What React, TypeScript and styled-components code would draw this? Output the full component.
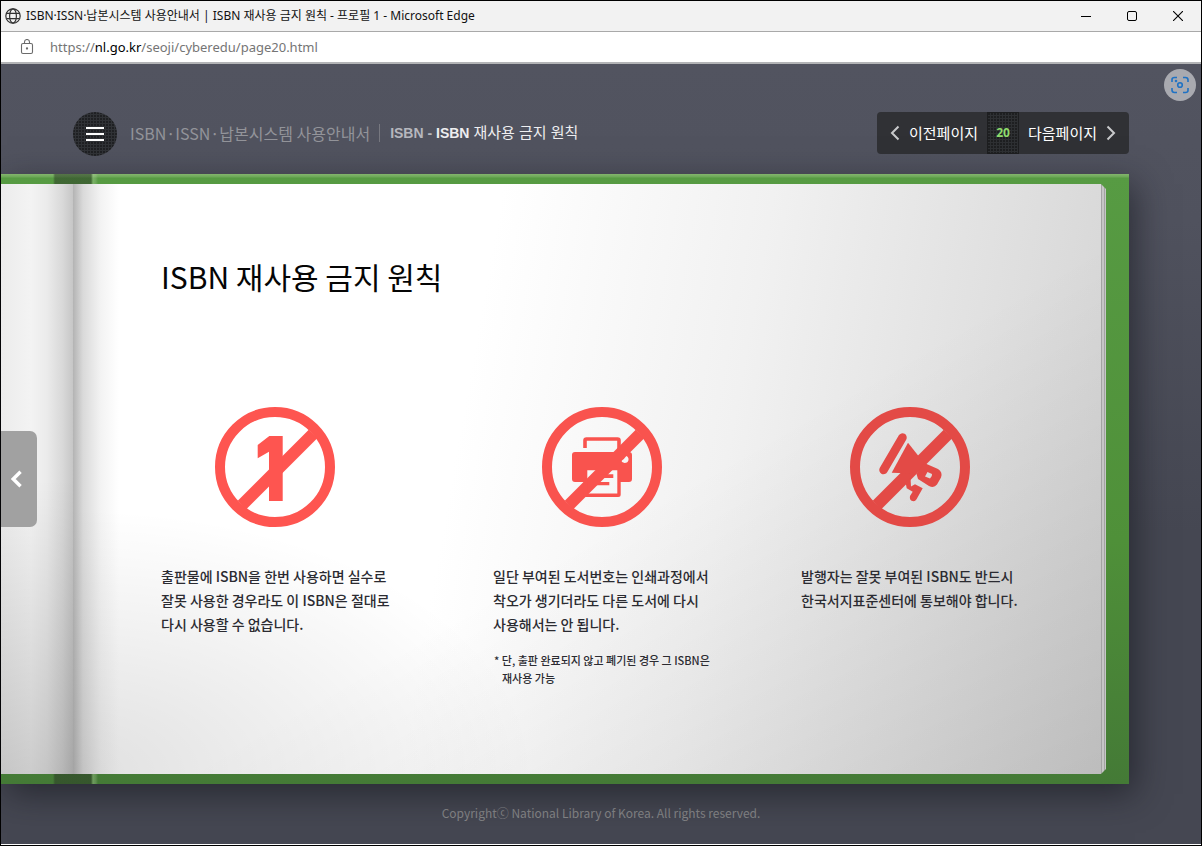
import React from "react";
import styled, { createGlobalStyle } from "styled-components";

const KR = `"Noto Sans CJK KR", sans-serif`;

const GlobalStyle = createGlobalStyle`
  *, *::before, *::after { box-sizing: border-box; }
  body { margin: 0; font-family: ${KR}; }
  h1, p, ul { margin: 0; padding: 0; }
  ul { list-style: none; }
  button { font: inherit; color: inherit; border: 0; padding: 0; background: none; cursor: pointer; }
  a { color: inherit; text-decoration: none; }
`;

const BrowserWindow = styled.div`
  display: flex;
  flex-direction: column;
  min-height: 100vh;
  border: 1px solid #000;
`;

const TitleBar = styled.header`
  display: flex;
  align-items: center;
  height: 31px;
  padding: 0 11px 0 4px;
  background: #f2f2f2;
  border-bottom: 1px solid #a9a9a9;
`;

const WindowTitle = styled.span`
  flex: 1;
  margin-left: 5px;
  font: 12px/20px "Noto Sans", ${KR};
  color: #111;
  white-space: nowrap;
`;

const WindowControls = styled.div`
  display: flex;
  gap: 22px;
`;

const WindowButton = styled.button`
  display: grid;
  place-items: center;
  width: 24px;
  height: 24px;
`;

const AddressBar = styled.div`
  display: flex;
  align-items: center;
  gap: 16px;
  height: 32px;
  padding-left: 19px;
  background: #fff;
  border-bottom: 2px solid #b3b4b6;
`;

const Address = styled.span`
  font: 13px/20px "Noto Sans", sans-serif;
  color: #757575;

  b { font-weight: 400; color: #000; }
`;

const Page = styled.div`
  position: relative;
  flex: 1;
  display: flex;
  flex-direction: column;
  background: linear-gradient(#525460, #50525e 20%, #454752 60%, #454752);
  border-bottom: 1px solid #fff;
`;

const CaptureButton = styled.button`
  position: absolute;
  top: 5px;
  right: 5px;
  display: grid;
  place-items: center;
  width: 32px;
  height: 32px;
  border-radius: 50%;
  background: #a9aab0;
`;

const PageHeader = styled.header`
  display: flex;
  align-items: flex-start;
  padding: 48px 72px 18px;
`;

const dots = `radial-gradient(circle at 1px 1px, rgba(20, 20, 22, 0.6) 1px, transparent 1px) 0 0 / 3px 3px`;

const MenuButton = styled.button`
  display: grid;
  place-items: center;
  width: 44px;
  height: 44px;
  border-radius: 50%;
  background: ${dots}, #303236;
`;

const Breadcrumb = styled.div`
  flex: 1;
  display: flex;
  align-items: center;
  height: 42px;
  margin-left: 13px;
  white-space: nowrap;
`;

const GuideTitle = styled.a`
  padding-right: 9px;
  font-size: 16px;
  line-height: 22px;
  color: #93949a;
`;

const Location = styled.p`
  padding-left: 10px;
  border-left: 1px solid #777880;
  font: 700 14px/18px "Liberation Sans", ${KR};
  color: #b6b7be;

  strong { color: #eeeef0; }
  span { font-size: 15px; font-weight: 400; }
`;

const Pager = styled.nav`
  display: flex;
  height: 42px;
  border-radius: 4px;
  overflow: hidden;
  background: #303135;
`;

const PagerLink = styled.a<{ $back?: boolean }>`
  display: flex;
  align-items: center;
  justify-content: ${(p) => (p.$back ? "flex-end" : "flex-start")};
  gap: 9px;
  width: 110px;
  padding: 0 9px;
  font-size: 15px;
  line-height: 20px;
  color: #fff;
  white-space: nowrap;
`;

const PageNumber = styled.span`
  width: 32px;
  border: 1px solid #1d1e20;
  background: ${dots}, #2e3033;
  font: 700 12px/40px "Open Sans", sans-serif;
  text-align: center;
  color: #8fdc6c;
`;

const Book = styled.main`
  position: relative;
  display: flex;
  margin-right: 72px;
  padding: 10px 23px 10px 0;
  background:
    linear-gradient(90deg, transparent 52px, rgba(40, 52, 36, 0.5) 54px, rgba(40, 52, 36, 0.5) 90px, rgba(190, 220, 170, 0.35) 92px, rgba(190, 220, 170, 0.2) 95px, transparent 97px),
    linear-gradient(#83b56d, #6ca757 3px, transparent 4px),
    linear-gradient(#579b43, #4f9039 60%, #447a36);
  box-shadow: 6px 10px 32px rgba(20, 22, 28, 0.6);
`;

const LeftPage = styled.div`
  flex: 0 0 72px;
  background:
    linear-gradient(rgba(0, 0, 0, 0) 50%, rgba(0, 0, 0, 0.16)),
    linear-gradient(90deg, #ececec, #f3f3f3 30px, #ebebeb 46px, #d8d8d8 62px, #c6c6c6);
`;

const RightPage = styled.article`
  flex: 1;
  padding: 74px 0 87px 88px;
  background:
    linear-gradient(90deg, rgba(90, 90, 90, 0.46), rgba(110, 110, 110, 0.26) 10px, rgba(140, 140, 140, 0.1) 28px, transparent 46px),
    radial-gradient(ellipse 45% 45% at 0 100%, rgba(0, 0, 0, 0.12), transparent),
    linear-gradient(150deg, transparent 55%, rgba(0, 0, 0, 0.1)),
    linear-gradient(100deg, #fff 38%, #f1f1f1 62%, #e1e1e1 82%, #d2d2d2);
`;

const PageEdge = styled.div`
  flex: 0 0 5px;
  background: repeating-linear-gradient(90deg, #a3a3a3 0 1px, #c6c6c6 1px 3px);
  clip-path: polygon(0 0, 100% 5px, 100% calc(100% - 5px), 0 100%);
`;

const Heading = styled.h1`
  font-size: 30px;
  font-weight: 400;
  line-height: 36px;
  color: #050505;
`;

const Rules = styled.ul`
  display: grid;
  grid-template-columns: 332fr 308fr 300fr;
  margin-top: 113px;
`;

const Rule = styled.li`
  white-space: nowrap;
`;

const Figure = styled.div<{ $width: number; $color: string }>`
  display: flex;
  justify-content: center;
  width: ${(p) => p.$width}px;
  margin-bottom: 37px;
  color: ${(p) => p.$color};
`;

const RuleText = styled.p`
  font-size: 14px;
  font-weight: 500;
  line-height: 24px;
  color: #2b2b31;
`;

const RuleNote = styled.p`
  margin-top: 15px;
  padding-left: 9px;
  text-indent: -8px;
  font-size: 11px;
  font-weight: 500;
  line-height: 18px;
  color: #2b2b31;
`;

const PreviousTab = styled.button`
  position: absolute;
  left: 0;
  top: 50%;
  display: grid;
  place-items: center;
  width: 36px;
  height: 96px;
  margin-top: -48px;
  padding-right: 5px;
  border-radius: 0 7px 7px 0;
  background: #a1a1a1;
`;

const Footer = styled.footer`
  padding: 19px 0 21px;
  font-size: 12px;
  line-height: 20px;
  text-align: center;
  color: #868688;
`;

function Prohibited({ children }: { children: React.ReactNode }) {
  return (
    <svg width="120" height="120" viewBox="0 0 120 120" fill="currentColor" aria-hidden="true">
      <circle cx="60" cy="60" r="55" fill="none" stroke="currentColor" strokeWidth="10" />
      <path d="M27 98 98 27" stroke="currentColor" strokeWidth="12" />
      {children}
    </svg>
  );
}

function Chevron({ left, size, color, width }: { left?: boolean; size: number; color: string; width: number }) {
  return (
    <svg width={(size * 5) / 8} height={size} viewBox="0 0 10 16" fill="none" stroke={color} strokeWidth={width} aria-hidden="true">
      <path d={left ? "M8.500 1.500 2 8 8.500 14.500" : "M1.500 1.500 8 8 1.500 14.500"} />
    </svg>
  );
}

export default function App() {
  return (
    <BrowserWindow>
      <GlobalStyle />
      <TitleBar>
        <svg width="16" height="16" viewBox="0 0 16 16" fill="none" stroke="#333" strokeWidth="1.2" aria-hidden="true">
          <circle cx="8" cy="8" r="7.2" />
          <ellipse cx="8" cy="8" rx="3.4" ry="7.2" />
          <path d="M1.5 5.4h13M1.5 10.6h13" />
        </svg>
        <WindowTitle>ISBN·ISSN·납본시스템 사용안내서 | ISBN 재사용 금지 원칙 - 프로필 1 - Microsoft Edge</WindowTitle>
        <WindowControls>
          <WindowButton aria-label="최소화">
            <svg width="10" height="10" stroke="#000"><path d="M0 5.5h10" /></svg>
          </WindowButton>
          <WindowButton aria-label="최대화">
            <svg width="10" height="10" fill="none" stroke="#000"><rect x=".5" y=".5" width="9" height="9" rx="1.5" /></svg>
          </WindowButton>
          <WindowButton aria-label="닫기">
            <svg width="10" height="10" stroke="#000" strokeWidth="1.1"><path d="M0 0l10 10M10 0 0 10" /></svg>
          </WindowButton>
        </WindowControls>
      </TitleBar>
      <AddressBar>
        <svg width="14" height="16" viewBox="0 0 14 16" fill="none" stroke="#6b6b6b" strokeWidth="1.1" aria-hidden="true">
          <rect x="1.500" y="4.500" width="11" height="10" rx="1.500" />
          <path d="M4.500 4.500V3a2.500 2.500 0 0 1 5 0v1.500" />
          <circle cx="7" cy="9.500" r=".6" fill="#6b6b6b" />
        </svg>
        <Address>https://<b>nl.go.kr</b>/seoji/cyberedu/page20.html</Address>
      </AddressBar>
      <Page>
        <PageHeader>
          <MenuButton aria-label="메뉴">
            <svg width="18" height="14" stroke="#fff" strokeWidth="2"><path d="M0 1h18M0 7h18M0 13h18" /></svg>
          </MenuButton>
          <Breadcrumb>
            <GuideTitle href="#">ISBN·ISSN·납본시스템 사용안내서</GuideTitle>
            <Location>ISBN - <strong>ISBN <span>재사용 금지 원칙</span></strong></Location>
          </Breadcrumb>
          <Pager>
            <PagerLink href="#" $back><Chevron left size={16} color="#c9cacc" width={2} />이전페이지</PagerLink>
            <PageNumber>20</PageNumber>
            <PagerLink href="#">다음페이지<Chevron size={16} color="#c9cacc" width={2} /></PagerLink>
          </Pager>
        </PageHeader>
        <Book>
          <LeftPage />
          <RightPage>
            <Heading>ISBN 재사용 금지 원칙</Heading>
            <Rules>
              <Rule>
                <Figure $width={228} $color="#fe5550">
                  <Prohibited>
                    <path d="M54.3 29H67.7V94H54V44.7L42.7 51.3V38Z" />
                  </Prohibited>
                </Figure>
                <RuleText>
                  출판물에 ISBN을 한번 사용하면 실수로<br />잘못 사용한 경우라도 이 ISBN은 절대로<br />다시 사용할 수 없습니다.
                </RuleText>
              </Rule>
              <Rule>
                <Figure $width={218} $color="#f9534e">
                  <Prohibited>
                    <path d="M43 41V33.5Q43 32 44.5 32H75.5Q77 32 77 33.5V46" fill="none" stroke="currentColor" strokeWidth="3.6" />
                    <path fillRule="evenodd" d="M33 45H87Q90 45 90 48V72Q90 75 87 75H78.7V87.5Q78.7 90 76.2 90H44Q41.7 90 41.7 87.5V75H33Q30 75 30 72V48Q30 45 33 45ZM45.3 63.3V86.6H75.3V63.3ZM83 48.6A3.7 3.7 0 0 1 86.500 53Q86 56 82.500 56 79.500 55.500 79 53L82 52Z" />
                    <path d="M58 67.3H71.3V71H58ZM54 75H67.3V78.3H54Z" />
                  </Prohibited>
                </Figure>
                <RuleText>
                  일단 부여된 도서번호는 인쇄과정에서<br />착오가 생기더라도 다른 도서에 다시<br />사용해서는 안 됩니다.
                </RuleText>
                <RuleNote>
                  * 단, 출판 완료되지 않고 폐기된 경우 그 ISBN은<br />재사용 가능
                </RuleNote>
              </Rule>
              <Rule>
                <Figure $width={218} $color="#e34a46">
                  <Prohibited>
                    <path d="M52.5 30.500 33.500 63" stroke="currentColor" strokeWidth="8.500" strokeLinecap="round" />
                    <path d="M58 35.7 41.7 65.7 62 66.5 74 56Z" />
                    <path fillRule="evenodd" d="M74.3 56 88 62Q93 65 91 70.5L87 77.5Q84 81.5 79 79L68 72 66.5 67ZM77.500 65 75 69.500 80 71.500Q82.500 69.500 82 67Z" />
                    <path d="M55.5 75 56.7 81.3 62.7 84.7 60 89Q59 94 63.5 94.2 66 94 67.5 90.5L72.7 81.3 65 77.3 61 79.5 60.5 71Z" />
                  </Prohibited>
                </Figure>
                <RuleText>
                  발행자는 잘못 부여된 ISBN도 반드시<br />한국서지표준센터에 통보해야 합니다.
                </RuleText>
              </Rule>
            </Rules>
          </RightPage>
          <PageEdge />
          <PreviousTab aria-label="이전">
            <Chevron left size={18} color="#fff" width={3} />
          </PreviousTab>
        </Book>
        <Footer>Copyrightⓒ National Library of Korea. All rights reserved.</Footer>
        <CaptureButton aria-label="화면 검색">
          <svg width="18" height="18" viewBox="0 0 18 18" fill="none" stroke="#1f72c4" strokeWidth="1.6" aria-hidden="true">
            <path d="M1 6V3.500Q1 1.500 3.500 1.500H6M12 1.500h2.500Q17 1.500 17 4V6M17 12v2.500Q17 16.500 14.500 16.500H12M6 16.500H3.500Q1 16.500 1 14V12" />
            <circle cx="9" cy="9" r="2.300" />
            <circle cx="5" cy="5" r=".5" />
          </svg>
        </CaptureButton>
      </Page>
    </BrowserWindow>
  );
}
